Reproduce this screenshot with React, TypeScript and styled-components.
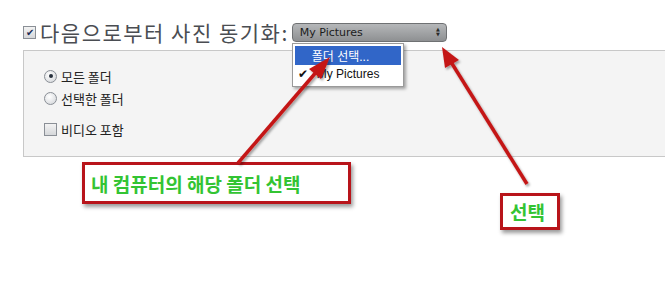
import styled, { createGlobalStyle } from 'styled-components';

const Global = createGlobalStyle`
  html, body { margin: 0; padding: 0; background: #ffffff; }
  body { font-family: "Noto Sans CJK KR", "Noto Sans", sans-serif; width: 665px; height: 293px; overflow: hidden; }
`;

const Page = styled.div`
  position: relative;
  width: 665px;
  height: 293px;
  padding: 21px 0 0 23px;
  box-sizing: border-box;
`;

const HeaderRow = styled.div`
  display: flex;
  align-items: center;
  height: 22px;
`;

const Box = styled.span`
  display: inline-flex;
  align-items: center;
  justify-content: center;
  width: 11px;
  height: 11px;
  border: 1px solid #8a8f96;
  background: linear-gradient(#f3f3f3, #d5d7da);
  box-sizing: content-box;
  color: #1b2a55;
  font-size: 10px;
  line-height: 1;
  flex-shrink: 0;
`;

const Radio = styled.span<{ $on?: boolean }>`
  display: inline-flex;
  align-items: center;
  justify-content: center;
  width: 11px;
  height: 11px;
  border-radius: 50%;
  border: 1px solid #8a8f96;
  background: radial-gradient(circle at 40% 35%, #ffffff, #cfd2d6);
  flex-shrink: 0;
  &::after {
    content: '';
    display: ${(p) => (p.$on ? 'block' : 'none')};
    width: 4px;
    height: 4px;
    border-radius: 50%;
    background: #26303c;
  }
`;

const Heading = styled.span`
  margin-left: 4px;
  font-size: 21px;
  letter-spacing: 1.5px;
  color: #4a4d52;
`;

const SelectWrap = styled.div`
  position: relative;
  margin-left: 3px;
`;

const Select = styled.div`
  display: flex;
  align-items: center;
  justify-content: space-between;
  width: 155px;
  height: 19px;
  padding: 0 6px 0 7px;
  box-sizing: border-box;
  border: 1px solid #6f7173;
  border-radius: 4px;
  background: linear-gradient(#b5b7b9, #8e9092);
  font-family: "DejaVu Sans", sans-serif;
  font-size: 11px;
  color: #1c1c1c;
`;

const Arrows = styled.span`
  display: flex;
  flex-direction: column;
  font-size: 5px;
  line-height: 5px;
  color: #2a2a2a;
`;

const Menu = styled.div`
  position: absolute;
  left: 0;
  top: 20px;
  width: 106px;
  padding: 2px;
  background: #ffffff;
  border: 1px solid #9a9a9a;
  box-shadow: 2px 2px 3px rgba(0, 0, 0, 0.35);
  z-index: 2;
`;

const MenuItem = styled.div<{ $active?: boolean }>`
  display: flex;
  align-items: center;
  height: 19px;
  padding-left: ${(p) => (p.$active ? '17px' : '3px')};
  background: ${(p) => (p.$active ? '#3166c8' : 'transparent')};
  color: ${(p) => (p.$active ? '#ffffff' : '#111111')};
  font-family: "Liberation Sans", "Noto Sans CJK KR", sans-serif;
  font-size: 12px;
  gap: 9px;
`;

const Panel = styled.div`
  margin-top: 7px;
  height: 107px;
  border: 1px solid #c8c8c8;
  border-right: none;
  background: #f4f4f4;
  padding: 14px 0 0 20px;
  box-sizing: border-box;
  display: flex;
  flex-direction: column;
`;

const Option = styled.label<{ $gap?: number }>`
  display: flex;
  align-items: center;
  gap: 4px;
  height: 22px;
  margin-top: ${(p) => p.$gap ?? 0}px;
  font-size: 13px;
  color: #222222;
`;

const Callout = styled.div`
  position: absolute;
  border: 3px solid #b8141a;
  background: #ffffff;
  box-shadow: 2px 3px 4px rgba(0, 0, 0, 0.4);
  color: #33c433;
  font-weight: bold;
  font-size: 19px;
  letter-spacing: 0;
  display: flex;
  align-items: center;
  box-sizing: border-box;
  z-index: 3;
`;

const Overlay = styled.svg`
  position: absolute;
  left: 0;
  top: 0;
  pointer-events: none;
  z-index: 4;
`;

export default function App() {
  return (
    <Page>
      <Global />
      <HeaderRow>
        <Box>✔</Box>
        <Heading>다음으로부터 사진 동기화:</Heading>
        <SelectWrap>
          <Select>
            <span>My Pictures</span>
            <Arrows>
              <span>▲</span>
              <span>▼</span>
            </Arrows>
          </Select>
          <Menu>
            <MenuItem $active>폴더 선택...</MenuItem>
            <MenuItem>
              <span>✔</span>
              <span>My Pictures</span>
            </MenuItem>
          </Menu>
        </SelectWrap>
      </HeaderRow>
      <Panel>
        <Option>
          <Radio $on />
          모든 폴더
        </Option>
        <Option>
          <Radio />
          선택한 폴더
        </Option>
        <Option $gap={9}>
          <Box />
          비디오 포함
        </Option>
      </Panel>

      <Callout style={{ left: 82, top: 162, width: 269, height: 42, paddingLeft: 6 }}>
        내 컴퓨터의 해당 폴더 선택
      </Callout>
      <Callout style={{ left: 500, top: 193, width: 60, height: 37, paddingLeft: 7 }}>
        선택
      </Callout>

      <Overlay width="665" height="293" viewBox="0 0 665 293">
        <defs>
          <filter id="sh" x="-20%" y="-20%" width="140%" height="140%">
            <feDropShadow dx="1.5" dy="2" stdDeviation="1.2" floodColor="#000" floodOpacity="0.35" />
          </filter>
        </defs>
        <g filter="url(#sh)" fill="#c41818" stroke="#c41818">
          <line x1="238" y1="163" x2="318" y2="70" strokeWidth="3.5" />
          <polygon points="330,57 309,69 321,79" stroke="none" />
          <line x1="527" y1="184" x2="451" y2="62" strokeWidth="3.5" />
          <polygon points="442,47 445,68 459,60" stroke="none" />
        </g>
      </Overlay>
    </Page>
  );
}
